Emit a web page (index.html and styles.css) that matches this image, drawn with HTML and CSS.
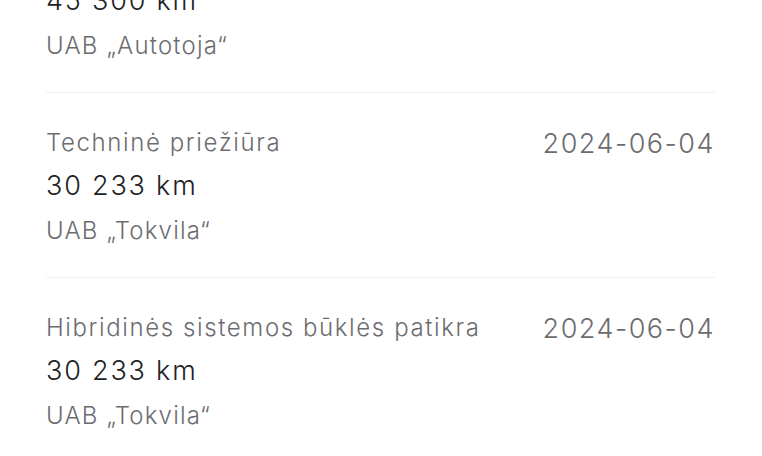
FILE: index.html
```html
<!DOCTYPE html>
<html lang="lt">
<head>
<meta charset="utf-8">
<link rel="stylesheet" href="styles.css">
</head>
<body>
<ul class="history">
  <li class="entry">
    <div class="info">
      <div class="title">Techninė priežiūra</div>
      <div class="km">45 300 km</div>
      <div class="company">UAB „Autotoja“</div>
    </div>
    <div class="date">2024-05-10</div>
  </li>
  <li class="entry">
    <div class="info">
      <div class="title">Techninė priežiūra</div>
      <div class="km">30 233 km</div>
      <div class="company">UAB „Tokvila“</div>
    </div>
    <div class="date">2024-06-04</div>
  </li>
  <li class="entry">
    <div class="info">
      <div class="title">Hibridinės sistemos būklės patikra</div>
      <div class="km">30 233 km</div>
      <div class="company">UAB „Tokvila“</div>
    </div>
    <div class="date">2024-06-04</div>
  </li>
</ul>
</body>
</html>
```

FILE: styles.css
```css
html, body {
  margin: 0;
  padding: 0;
  background: #ffffff;
  overflow: hidden;
}
body {
  font-family: Inter, "Noto Sans", sans-serif;
}
.history {
  list-style: none;
  margin: -92px 0 0 0;
  padding: 0 47px 0 46px;
}
.entry {
  display: flex;
  justify-content: space-between;
  align-items: flex-start;
  padding: 34px 0 30px 0;
  border-bottom: 1px solid #efefef;
}
.info {
  display: flex;
  flex-direction: column;
}
.title {
  font-size: 24px;
  line-height: 32px;
  font-weight: 300;
  letter-spacing: 1.6px;
  color: #6c6c70;
}
.km {
  margin-top: 7px;
  font-size: 27px;
  line-height: 40px;
  font-weight: 350;
  letter-spacing: 1.8px;
  color: #222226;
}
.company {
  margin-top: 9px;
  font-size: 24px;
  line-height: 32px;
  font-weight: 300;
  letter-spacing: 1.2px;
  color: #6c6c70;
}
.date {
  margin-top: 1px;
  font-size: 27px;
  line-height: 32px;
  font-weight: 300;
  letter-spacing: 1.5px;
  color: #6c6c70;
}
```
